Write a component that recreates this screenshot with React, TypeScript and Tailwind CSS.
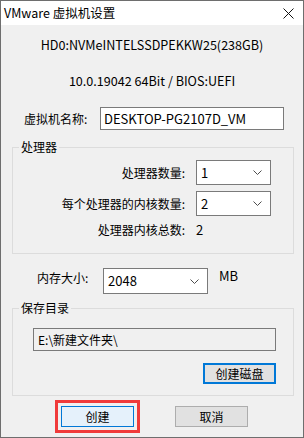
import React from 'react';

const font = "font-['Segoe_UI','Noto_Sans_CJK_SC','Microsoft_YaHei',sans-serif]";

const Chevron = () => (
  <svg width="9" height="5" viewBox="0 0 9 5" className="shrink-0">
    <path d="M0.5 0.5 L4.5 4.5 L8.5 0.5" fill="none" stroke="#4d4d4d" strokeWidth="1" />
  </svg>
);

interface SelectBoxProps {
  value: string;
  width: string;
  height: string;
}

const SelectBox: React.FC<SelectBoxProps> = ({ value, width, height }) => (
  <div
    className={`${width} ${height} flex items-center justify-between border border-[#7a7a7a] bg-white pl-[4px] pr-[8px] text-[13px]`}
  >
    <span>{value}</span>
    <Chevron />
  </div>
);

export default function App() {
  return (
    <div
      className={`${font} w-[304px] h-[438px] flex flex-col border border-[#6e6e6e] bg-[#f0f0f0] text-[12px] leading-[16px] text-black`}
    >
      {/* title bar */}
      <div className="h-[24px] shrink-0 flex items-center justify-between bg-white pl-[3px] pr-[9px]">
        <span className="text-[12.5px]">VMware 虚拟机设置</span>
        <svg width="11" height="11" viewBox="0 0 11 11">
          <path d="M0.5 0.5 L10.5 10.5 M10.5 0.5 L0.5 10.5" stroke="#111" strokeWidth="1" />
        </svg>
      </div>

      <div className="flex flex-col">
        <div className="mt-[12px] text-center text-[12.6px]">HD0:NVMeINTELSSDPEKKW25(238GB)</div>
        <div className="mt-[20px] text-center text-[12.6px]">10.0.19042 64Bit / BIOS:UEFI</div>

        {/* name row */}
        <div className="mt-[18px] flex items-center pl-[23px]">
          <span className="w-[76px]">虚拟机名称:</span>
          <div className="w-[184px] h-[23px] flex items-center border border-[#7a7a7a] bg-white pl-[3px] text-[13px]">
            DESKTOP-PG2107D_VM
          </div>
        </div>

        {/* processor group */}
        <fieldset className="mt-[9px] ml-[11px] w-[282px] border border-[#dcdcdc] pt-[5px] pb-[15px]">
          <legend className="ml-[6px] px-[2px]">处理器</legend>
          <div className="flex flex-col gap-[6px]">
            <div className="flex items-center">
              <span className="w-[172px] text-right">处理器数量:</span>
              <div className="ml-[11px]">
                <SelectBox value="1" width="w-[75px]" height="h-[25px]" />
              </div>
            </div>
            <div className="flex items-center">
              <span className="w-[172px] text-right">每个处理器的内核数量:</span>
              <div className="ml-[11px]">
                <SelectBox value="2" width="w-[75px]" height="h-[25px]" />
              </div>
            </div>
            <div className="flex items-center">
              <span className="w-[172px] text-right">处理器内核总数:</span>
              <span className="ml-[11px] text-[13px]">2</span>
            </div>
          </div>
        </fieldset>

        {/* memory row */}
        <div className="mt-[14px] flex items-start pl-[36px]">
          <span className="w-[66px] pt-[2px]">内存大小:</span>
          <SelectBox value="2048" width="w-[105px]" height="h-[26px]" />
          <span className="ml-[11px] text-[13px]">MB</span>
        </div>

        {/* save dir group */}
        <fieldset className="mt-[6px] ml-[11px] w-[282px] border border-[#dcdcdc] pt-[12px] pb-[11px]">
          <legend className="ml-[6px] px-[2px]">保存目录</legend>
          <div className="ml-[20px] w-[243px] h-[23px] flex items-center border border-[#7a7a7a] bg-[#f0f0f0] pl-[4px]">
            E:\新建文件夹\
          </div>
          <div className="mt-[12px] flex justify-end pr-[17px]">
            <button className="w-[73px] h-[21px] flex items-center justify-center border-2 border-[#0078d7] bg-[#e1e1e1]">
              创建磁盘
            </button>
          </div>
        </fieldset>

        {/* bottom buttons */}
        <div className="mt-[4px] flex items-center pl-[54px]">
          <div className="w-[85px] h-[33px] flex items-center justify-center border-[3px] border-[#f03a3a]">
            <button className="w-[73px] h-[21px] flex items-center justify-center border border-[#0078d7] bg-[#e5f1fb]">
              创建
            </button>
          </div>
          <button className="ml-[35px] w-[73px] h-[21px] flex items-center justify-center border border-[#adadad] bg-[#e1e1e1]">
            取消
          </button>
        </div>
      </div>
    </div>
  );
}
